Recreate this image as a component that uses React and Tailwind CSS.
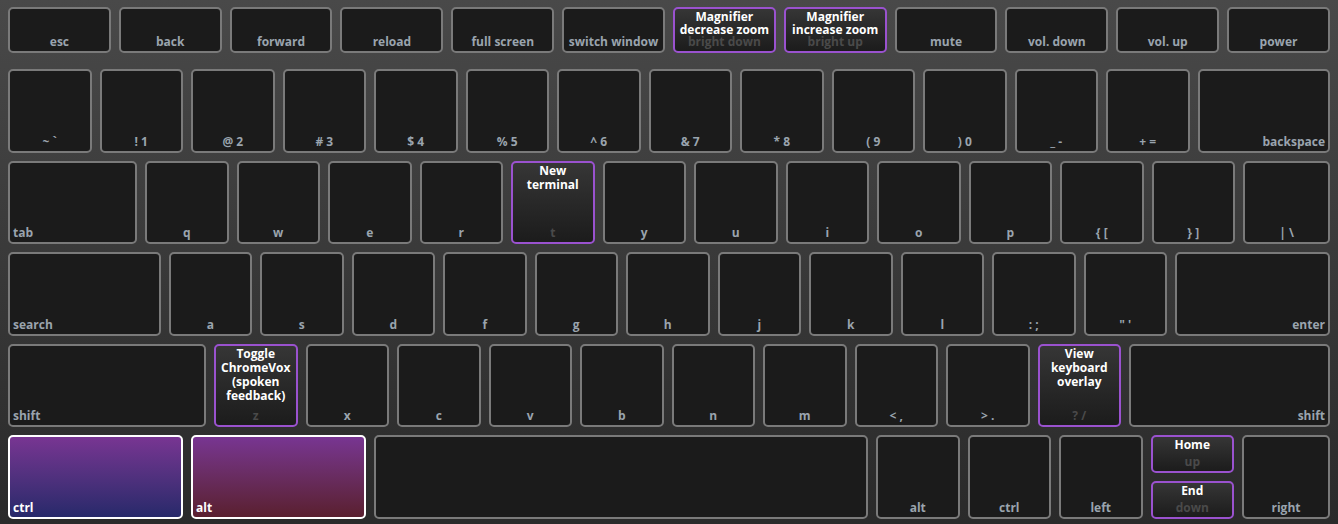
import React from "react";

const FONT = { fontFamily: '"Open Sans", "DejaVu Sans", sans-serif' };

function Key({ label, align = "center", cls = "w-[83.5px]", action, variant, tall = 14 }) {
  const alignCls =
    align === "left" ? "justify-start" : align === "right" ? "justify-end" : "justify-center";
  let box = "border-[#7a7a7a] bg-[#1b1b1b]";
  let labelColor = "text-[#9aa4ae]";
  if (action) {
    box = "border-[#9a52cf] bg-gradient-to-b from-[#363636] to-[#1c1c1c]";
    labelColor = "text-[#4a4a4a]";
  }
  if (variant === "ctrl") {
    box = "border-white bg-gradient-to-b from-[#783592] to-[#27296a]";
    labelColor = "text-white";
  }
  if (variant === "alt") {
    box = "border-white bg-gradient-to-b from-[#783592] to-[#5a1f2f]";
    labelColor = "text-white";
  }
  return (
    <div
      className={`relative flex shrink-0 flex-col justify-end rounded-[5px] border-2 ${box} ${cls}`}
    >
      <div
        className={`flex ${alignCls} px-[3px] pb-[2px] text-[12px] font-bold leading-[14px] ${labelColor} whitespace-pre`}
      >
        {label}
      </div>
      {action && (
        <div
          className={`absolute inset-x-0 top-0 pt-[1px] text-center text-[12px] font-bold text-white ${
            tall === 13 ? "leading-[13px]" : "leading-[14px]"
          }`}
        >
          {action.map((l, i) => (
            <div key={i}>{l}</div>
          ))}
        </div>
      )}
    </div>
  );
}

function SplitKey() {
  return (
    <div className="flex w-[83.5px] shrink-0 flex-col gap-2">
      <Key cls="flex-1 w-full" label="up" action={["Home"]} />
      <Key cls="flex-1 w-full" label="down" action={["End"]} />
    </div>
  );
}

export default function App() {
  const fkeys = [
    ["esc"],
    ["back"],
    ["forward"],
    ["reload"],
    ["full screen"],
    ["switch window"],
    ["bright down", ["Magnifier", "decrease zoom"]],
    ["bright up", ["Magnifier", "increase zoom"]],
    ["mute"],
    ["vol. down"],
    ["vol. up"],
    ["power"],
  ];
  const row2 = ["~ `", "! 1", "@ 2", "# 3", "$ 4", "% 5", "^ 6", "& 7", "* 8", "( 9", ") 0", "_ -", "+ ="];
  const row3 = ["q", "w", "e", "r", "t", "y", "u", "i", "o", "p", "{ [", "} ]"];
  const row4 = ["a", "s", "d", "f", "g", "h", "j", "k", "l", ": ;", "\" '"];
  const row5 = ["z", "x", "c", "v", "b", "n", "m", "< ,", "> .", "? /"];

  return (
    <div
      className="flex h-[524px] w-[1338px] flex-col bg-gradient-to-b from-[#494949] to-[#2a2a2a] px-2 pt-[7px]"
      style={FONT}
    >
      <div className="mb-4 flex h-[46px] gap-2">
        {fkeys.map(([l, a]) => (
          <Key key={l} label={l} cls="flex-1" action={a} tall={13} />
        ))}
      </div>

      <div className="flex flex-col gap-2">
        <div className="flex h-[83.5px] gap-2">
          {row2.map((l) => (
            <Key key={l} label={l} />
          ))}
          <Key label="backspace" align="right" cls="flex-1" />
        </div>

        <div className="flex h-[83.5px] gap-2">
          <Key label="tab" align="left" cls="w-[129px]" />
          {row3.map((l) =>
            l === "t" ? (
              <Key key={l} label={l} action={["New", "terminal"]} />
            ) : (
              <Key key={l} label={l} />
            )
          )}
          <Key label="| \" cls="flex-1" />
        </div>

        <div className="flex h-[83.5px] gap-2">
          <Key label="search" align="left" cls="w-[152.5px]" />
          {row4.map((l) => (
            <Key key={l} label={l} />
          ))}
          <Key label="enter" align="right" cls="flex-1" />
        </div>

        <div className="flex h-[83.5px] gap-2">
          <Key label="shift" align="left" cls="w-[198px]" />
          {row5.map((l) =>
            l === "z" ? (
              <Key key={l} label={l} action={["Toggle", "ChromeVox", "(spoken", "feedback)"]} />
            ) : l === "? /" ? (
              <Key key={l} label={l} action={["View", "keyboard", "overlay"]} />
            ) : (
              <Key key={l} label={l} />
            )
          )}
          <Key label="shift" align="right" cls="flex-1" />
        </div>

        <div className="flex h-[83.5px] gap-2">
          <Key label="ctrl" align="left" cls="w-[175px]" variant="ctrl" />
          <Key label="alt" align="left" cls="w-[175px]" variant="alt" />
          <Key label="" cls="w-[494px]" />
          <Key label="alt" />
          <Key label="ctrl" />
          <Key label="left" />
          <SplitKey />
          <Key label="right" cls="flex-1" />
        </div>
      </div>
    </div>
  );
}
